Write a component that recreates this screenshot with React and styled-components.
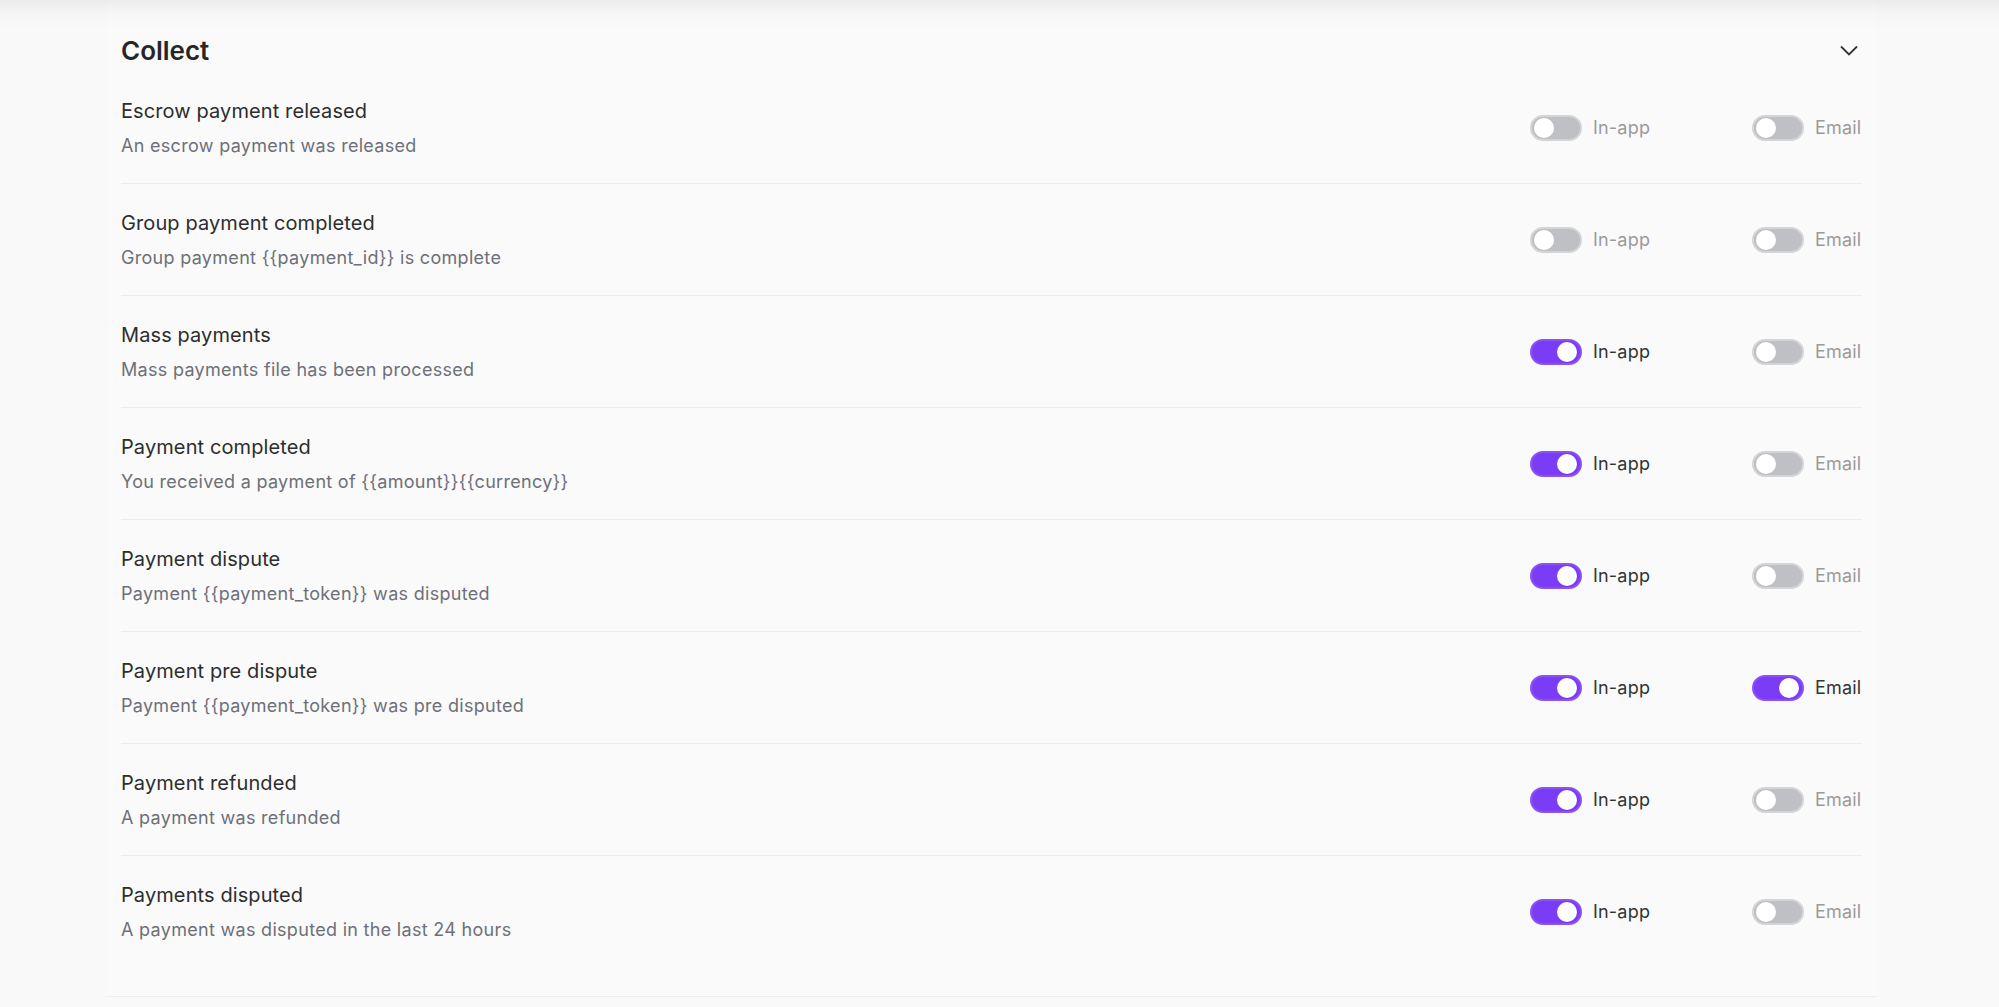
import React from 'react'
import styled, { createGlobalStyle } from 'styled-components'

const GlobalStyle = createGlobalStyle`
  html, body {
    margin: 0;
    padding: 0;
  }
  body {
    background: linear-gradient(#ebebeb 0, #f5f5f5 12px, #f9f9f9 30px);
    font-family: Inter, "Noto Sans", "Liberation Sans", sans-serif;
    color: #2b2b2b;
  }
`

const Page = styled.div`
  min-height: 1007px;
  padding: 0 122px 0 106px;
`

const Card = styled.section`
  background: linear-gradient(#ececec 0, #f6f6f6 12px, #fafafa 30px);
  padding: 28px 15px 28px 15px;
  border-bottom: 1px solid #eeeeee;
`

const Header = styled.div`
  display: flex;
  align-items: center;
  justify-content: space-between;
  height: 44px;
`

const Title = styled.h2`
  margin: 0;
  font-size: 26px;
  font-weight: 600;
  color: #262626;
`

const Chevron = styled.button`
  display: flex;
  align-items: center;
  background: none;
  border: 0;
  padding: 0;
  margin-right: 4px;
  color: #333;
  cursor: pointer;
`

const Row = styled.div`
  display: flex;
  align-items: center;
  justify-content: space-between;
  height: 111px;
  border-bottom: 1px solid ${p => (p.$last ? 'transparent' : '#ececec')};
`

const Info = styled.div`
  display: flex;
  flex-direction: column;
  gap: 8px;
`

const RowTitle = styled.div`
  font-size: 20px;
  line-height: 28px;
  letter-spacing: 0.1px;
  color: #2d2d2d;
`

const RowDesc = styled.div`
  font-size: 18px;
  line-height: 26px;
  letter-spacing: 0.3px;
  color: #6e7079;
`

const Controls = styled.div`
  display: grid;
  grid-template-columns: 222px 110px;
  align-items: center;
`

const Option = styled.label`
  display: flex;
  align-items: center;
  gap: 11px;
  font-size: 18px;
  letter-spacing: 0.2px;
  color: ${p => (p.$on ? '#333333' : '#9a9a9c')};
  cursor: pointer;
`

const Track = styled.span`
  position: relative;
  box-sizing: border-box;
  width: 52px;
  height: 26px;
  border-radius: 13px;
  background: ${p => (p.$on ? '#7a3cf4' : '#bfc0c3')};
  border: 2px solid ${p => (p.$on ? '#8a52f6' : '#d3d4d7')};
`

const Knob = styled.span`
  position: absolute;
  top: 1px;
  left: ${p => (p.$on ? '25px' : '2px')};
  width: 20px;
  height: 20px;
  border-radius: 50%;
  background: #ffffff;
`

const items = [
  ['Escrow payment released', 'An escrow payment was released', false, false],
  ['Group payment completed', 'Group payment {{payment_id}} is complete', false, false],
  ['Mass payments', 'Mass payments file has been processed', true, false],
  ['Payment completed', 'You received a payment of {{amount}}{{currency}}', true, false],
  ['Payment dispute', 'Payment {{payment_token}} was disputed', true, false],
  ['Payment pre dispute', 'Payment {{payment_token}} was pre disputed', true, true],
  ['Payment refunded', 'A payment was refunded', true, false],
  ['Payments disputed', 'A payment was disputed in the last 24 hours', true, false],
]

function Toggle({ on, label }) {
  return (
    <Option $on={on}>
      <Track $on={on}>
        <Knob $on={on} />
      </Track>
      {label}
    </Option>
  )
}

export default function App() {
  return (
    <Page>
      <GlobalStyle />
      <Card>
        <Header>
          <Title>Collect</Title>
          <Chevron aria-label="Collapse">
            <svg width="18" height="11" viewBox="0 0 18 11" fill="none">
              <polyline points="1,1.5 9,9.5 17,1.5" stroke="currentColor" strokeWidth="1.8" />
            </svg>
          </Chevron>
        </Header>
        {items.map(([title, desc, inApp, email], i) => (
          <Row key={title} $last={i === items.length - 1}>
            <Info>
              <RowTitle>{title}</RowTitle>
              <RowDesc>{desc}</RowDesc>
            </Info>
            <Controls>
              <Toggle on={inApp} label="In-app" />
              <Toggle on={email} label="Email" />
            </Controls>
          </Row>
        ))}
      </Card>
    </Page>
  )
}
